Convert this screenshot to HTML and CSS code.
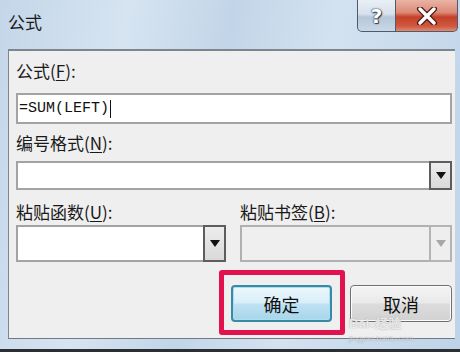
FILE: index.html
```html
<!DOCTYPE html>
<html lang="zh">
<head>
<meta charset="utf-8">
<title>公式</title>
<link rel="stylesheet" href="styles.css">
</head>
<body>
<div class="window">
  <div class="titlebar">
    <div class="title">公式</div>
    <div class="controls">
      <div class="ctl help">?</div>
      <div class="ctl close">
        <svg width="22" height="18" viewBox="0 0 22 18"><path d="M4 2 L18 16 M18 2 L4 16" stroke="#4a1a14" stroke-width="6" stroke-linecap="round"/><path d="M4 2 L18 16 M18 2 L4 16" stroke="#fff" stroke-width="3.4" stroke-linecap="round"/></svg>
      </div>
    </div>
  </div>
  <div class="client">
    <div class="label l1">公式(<u>F</u>):</div>
    <div class="input">=SUM(LEFT)<span class="caret"></span></div>
    <div class="label l2">编号格式(<u>N</u>):</div>
    <div class="select s-wide">
      <div class="sel-text"></div>
      <div class="drop"><span class="tri"></span></div>
    </div>
    <div class="pair">
      <div class="col">
        <div class="label">粘贴函数(<u>U</u>):</div>
        <div class="select s-tall">
          <div class="sel-text"></div>
          <div class="drop"><span class="tri"></span></div>
        </div>
      </div>
      <div class="col">
        <div class="label">粘贴书签(<u>B</u>):</div>
        <div class="select s-tall disabled">
          <div class="sel-text"></div>
          <div class="drop"><span class="tri"></span></div>
        </div>
      </div>
    </div>
    <div class="buttons">
      <div class="btn ok">确定<span class="highlight"></span></div>
      <div class="btn cancel">取消</div>
    </div>
    <div class="watermark">Bai<span class="paw">●</span>经验<br><span class="wm-url">jingyan.baidu.com</span></div>
  </div>
  <div class="bottom-frame"></div>
</div>
</body>
</html>
```
FILE: styles.css
```css
html, body {
  margin: 0;
  padding: 0;
}
body {
  width: 460px;
  height: 353px;
  overflow: hidden;
  background: #ffffff;
  font-family: "Noto Sans CJK SC", "Liberation Sans", sans-serif;
}
.window {
  width: 460px;
  height: 349px;
  background: linear-gradient(100deg, #c4d6e9 0%, #d6e4f1 25%, #c2d5e8 45%, #d3e2f0 65%, #bfd3e8 100%);
  border-bottom: 3px solid #2b2f33;
  display: flex;
  flex-direction: column;
  position: relative;
}
.titlebar {
  height: 49px;
  display: flex;
  justify-content: space-between;
  align-items: flex-start;
  padding-left: 8px;
}
.title {
  margin-top: 10px;
  font-size: 17px;
  line-height: 24px;
  color: #1a1a1a;
}
.controls {
  display: flex;
  margin-right: 2px;
}
.ctl {
  height: 32px;
  border: 1px solid #4d5c6c;
  border-top: none;
  display: flex;
  align-items: center;
  justify-content: center;
  box-sizing: border-box;
}
.help {
  width: 39px;
  border-radius: 0 0 0 5px;
  background: linear-gradient(#e9eff5 0%, #d7e1ec 45%, #b6c7d8 55%, #c9d8e6 100%);
  color: #fff;
  font-family: "DejaVu Sans", sans-serif;
  font-weight: bold;
  font-size: 20px;
  text-shadow: 0 0 2px #2d3b4a, 0 0 1px #2d3b4a, 1px 1px 1px #2d3b4a;
}
.close {
  width: 62px;
  border-left: none;
  border-radius: 0 0 5px 0;
  background: linear-gradient(#eab3a6 0%, #dc8a76 40%, #c5402a 55%, #cf5a40 85%, #e08a70 100%);
}
.client {
  flex: 1;
  margin: 0 5px 0 8px;
  border-top: 2px solid #7d868f;
  border-left: 1px solid #7d868f;
  border-bottom: 1px solid #6f7a85;
  background: #efefef;
  padding: 9px 0 0 7px;
  display: flex;
  flex-direction: column;
  position: relative;
}
.label {
  font-size: 17px;
  line-height: 22px;
  height: 22px;
  color: #1a1a1a;
  white-space: nowrap;
}
.label u {
  text-decoration: underline;
  text-underline-offset: 2px;
}
.l1 {
  margin-bottom: 11px;
}
.input {
  height: 31px;
  box-sizing: border-box;
  border: 2px solid #a3a3a3;
  background: #fff;
  margin-right: 3px;
  font-family: "Liberation Mono", monospace;
  font-size: 15px;
  line-height: 27px;
  padding-left: 1px;
  color: #111;
  display: flex;
  align-items: center;
}
.caret {
  display: inline-block;
  width: 1px;
  height: 18px;
  background: #111;
  margin-left: 1px;
}
.l2 {
  margin-top: 8px;
  margin-bottom: 7px;
}
.select {
  display: flex;
  box-sizing: border-box;
  border: 2px solid #a3a3a3;
  background: #fff;
}
.s-wide {
  height: 29px;
  margin-right: 3px;
}
.sel-text {
  flex: 1;
}
.drop {
  width: 23px;
  box-sizing: border-box;
  border: 2px solid #5d5d5d;
  background: linear-gradient(#ededed, #d9d9d9);
  display: flex;
  align-items: center;
  justify-content: center;
  margin: -2px -2px -2px 0;
}
.tri {
  width: 0;
  height: 0;
  border-left: 5px solid transparent;
  border-right: 5px solid transparent;
  border-top: 7px solid #111;
}
.pair {
  display: flex;
  gap: 14px;
  margin-top: 11px;
  margin-right: 3px;
}
.col {
  display: flex;
  flex-direction: column;
  gap: 2px;
}
.col:first-child {
  width: 210px;
}
.col:last-child {
  flex: 1;
}
.s-tall {
  height: 37px;
}
.disabled {
  background: #efefef;
  border-color: #b0b0b0;
}
.disabled .drop {
  border-color: #b4b4b4;
  background: #eeeeee;
}
.disabled .tri {
  border-top-color: #a7a7a7;
}
.buttons {
  display: flex;
  justify-content: flex-end;
  gap: 18px;
  margin-top: 23px;
  margin-right: 3px;
}
.btn {
  height: 37px;
  box-sizing: border-box;
  border-radius: 4px;
  display: flex;
  align-items: center;
  justify-content: center;
  font-size: 18px;
  color: #111;
  position: relative;
}
.ok {
  width: 101px;
  border: 2px solid #3a8aa6;
  background: linear-gradient(#ecf7fd 0%, #d9eef9 48%, #bfe2f4 52%, #a8d4ea 100%);
  box-shadow: inset 0 0 0 1px #a7e0f0;
}
.cancel {
  width: 102px;
  border: 1px solid #707070;
  background: linear-gradient(#f4f4f4 0%, #e9e9e9 48%, #dcdcdc 52%, #d2d2d2 100%);
  box-shadow: inset 0 0 0 1px #fbfbfb;
}
.highlight {
  position: absolute;
  left: -14px;
  top: -17px;
  right: -15px;
  bottom: -15px;
  border: 5px solid #e2124e;
  border-radius: 3px;
  pointer-events: none;
}
.watermark {
  position: absolute;
  left: 340px;
  top: 267px;
  font-family: "Liberation Sans", "Noto Sans CJK SC", sans-serif;
  font-size: 13px;
  line-height: 12px;
  font-weight: bold;
  color: rgba(255, 255, 255, 0.8);
  text-shadow: 0 0 1px rgba(110, 110, 110, 0.7);
}
.paw {
  font-size: 10px;
}
.wm-url {
  font-size: 8px;
  font-weight: normal;
  color: rgba(255, 255, 255, 0.6);
}
.bottom-frame {
  height: 10px;
}
```
